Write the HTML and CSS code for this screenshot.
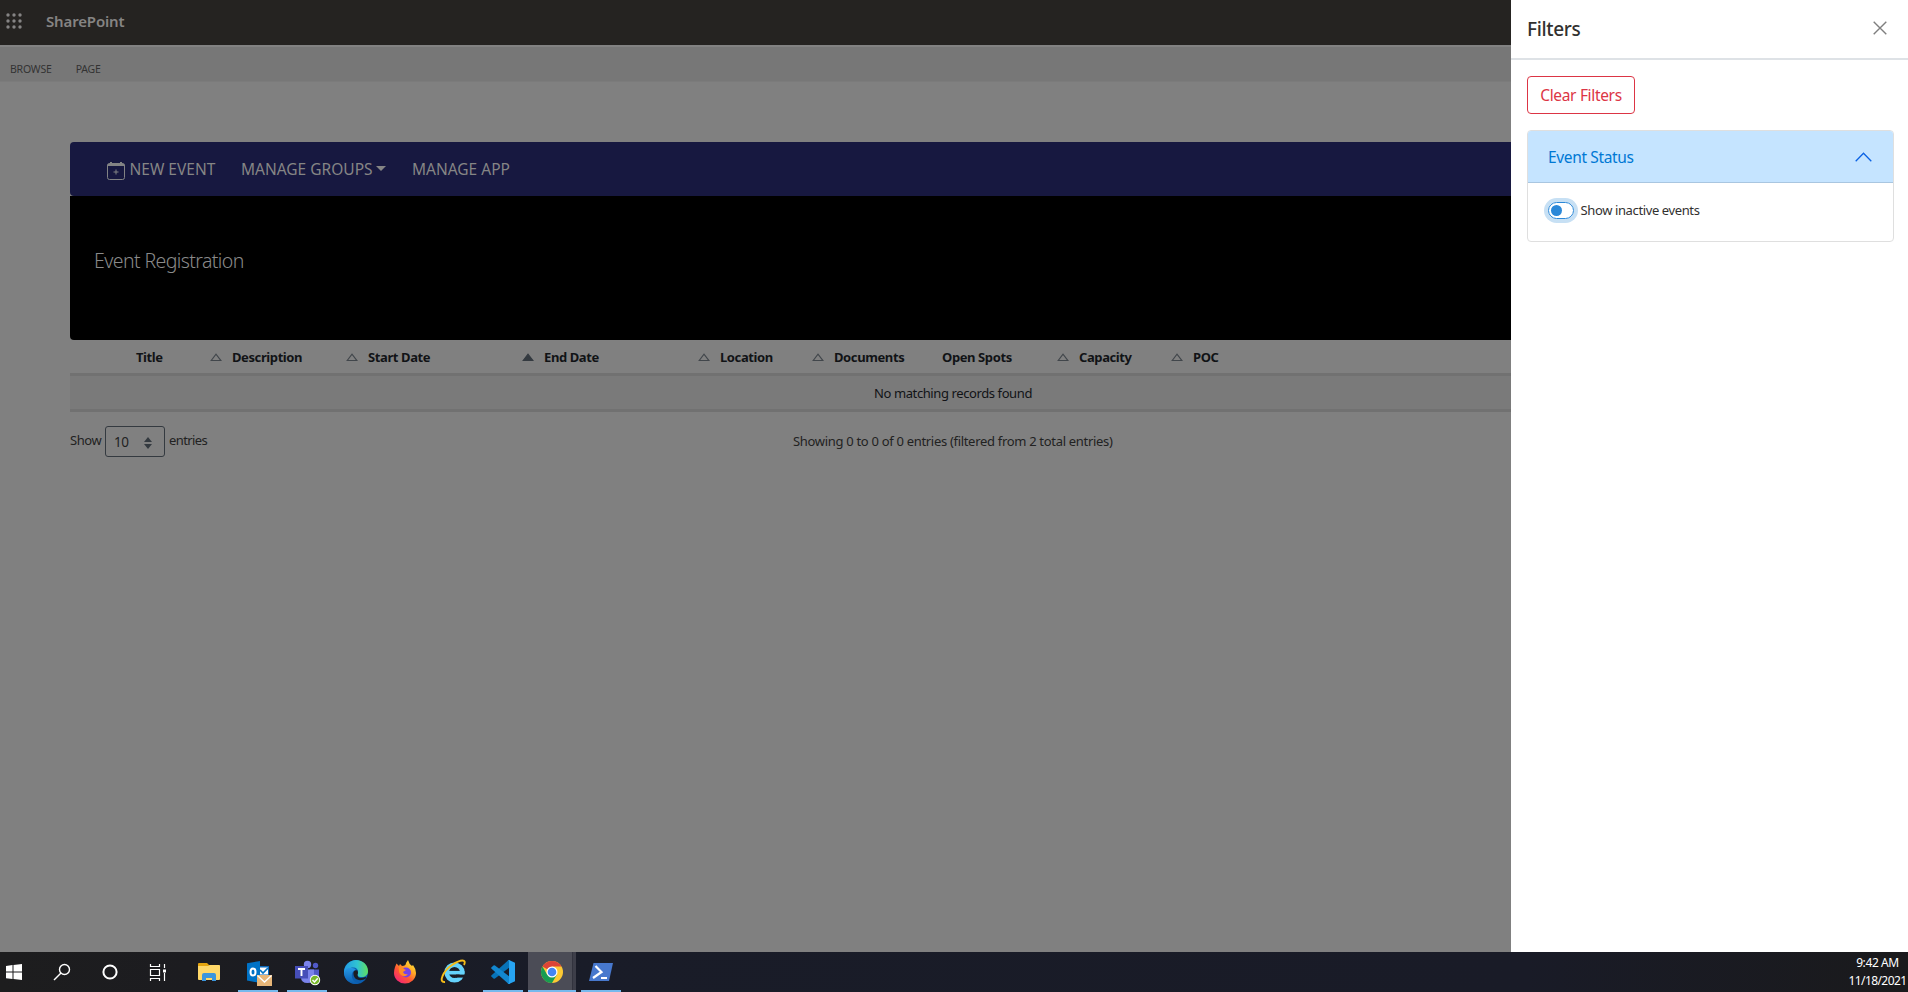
FILE: index.html
```
<!DOCTYPE html>
<html lang="en"><head><meta charset="utf-8"><title>Event Registration</title><link rel="stylesheet" href="styles.css"></head>
<body>
<div class="screen">
<div class="workspace">
<main class="site">
<header class="suite"><svg class="waffle" width="16" height="16" viewBox="0 0 16 16"><g fill="#858484"><circle cx="2" cy="2" r="1.7"/><circle cx="8" cy="2" r="1.7"/><circle cx="14" cy="2" r="1.7"/><circle cx="2" cy="8" r="1.7"/><circle cx="8" cy="8" r="1.7"/><circle cx="14" cy="8" r="1.7"/><circle cx="2" cy="14" r="1.7"/><circle cx="8" cy="14" r="1.7"/><circle cx="14" cy="14" r="1.7"/></g></svg><span class="brand">SharePoint</span></header>
<nav class="ribbon"><span class="browse">BROWSE</span><span class="page">PAGE</span></nav>
<section class="app">
<nav class="menu"><svg width="18" height="18" viewBox="0 0 18 18"><path d="M3 0h2v1h8V0h2v1q3 0 3 3H0Q0 1 3 1z" fill="#828384"/><rect x=".5" y="2" width="17" height="15.5" rx="2" fill="none" stroke="#828384"/><path d="M9 7.5v5M6.500 10h5" stroke="#828384"/></svg><span class="m1">NEW EVENT</span><span class="m2">MANAGE GROUPS</span><i class="caret"></i><span class="m3">MANAGE APP</span></nav>
<div class="hero"><h1>Event Registration</h1></div>
<div class="thead">
<span class="c0">Title</span><span class="c1"><svg class="tri"><path d="M1.200 7.500 6 1.200 10.800 7.500z"/></svg><b>Description</b></span><span class="c2"><svg class="tri"><path d="M1.200 7.500 6 1.200 10.800 7.500z"/></svg><b>Start Date</b></span><span class="c3"><svg class="tri on"><path d="M1.200 7.500 6 1.200 10.800 7.500z"/></svg><b>End Date</b></span><span class="c4"><svg class="tri"><path d="M1.200 7.500 6 1.200 10.800 7.500z"/></svg><b>Location</b></span><span class="c5"><svg class="tri"><path d="M1.200 7.500 6 1.200 10.800 7.500z"/></svg><b>Documents</b></span><span class="c6">Open Spots</span><span class="c7"><svg class="tri"><path d="M1.200 7.500 6 1.200 10.800 7.500z"/></svg><b>Capacity</b></span><span class="c8"><svg class="tri"><path d="M1.200 7.500 6 1.200 10.800 7.500z"/></svg><b>POC</b></span>
</div>
<div class="empty"><span>No matching records found</span></div>
<div class="foot"><span class="show">Show</span><span class="select">10<svg width="8" height="12" viewBox="0 0 8 12"><path d="M0 5 4 0 8 5zM0 7h8L4 12z" fill="#343a40"/></svg></span><span class="entries">entries</span><span class="info">Showing 0 to 0 of 0 entries (filtered from 2 total entries)</span></div>
</section>
</main>
<aside class="panel">
<header class="phead"><h2>Filters</h2><svg width="14" height="14" viewBox="0 0 14 14"><path d="M.7.7l12.600 12.600M13.300.7.7 13.300" stroke="#7f7f7f" stroke-width="1.400" fill="none"/></svg></header>
<div class="pbody">
<button class="clear"><span>Clear Filters</span></button>
<section class="card"><header><span>Event Status</span><svg width="17" height="10" viewBox="0 0 17 10"><path d="M.7 9.200 8.500 1.200l7.800 8" fill="none" stroke="#0c63e4" stroke-width="1.300"/></svg></header>
<div class="opt"><span class="toggle"><i></i></span><label>Show inactive events</label></div></section>
</div>
</aside>
</div>
<footer class="taskbar">
<div class="sys first"><svg width="28" height="40" viewBox="0 0 28 40"><path d="M6 14l6.500-.9v6.400H6zM13.500 13 22 12v7.500h-8.500zM6 20.500h6.500v6.500L6 26.200zM13.500 20.500H22V28l-8.500-1z" fill="#fff"/></svg></div>
<div class="sys"><svg width="28" height="40" viewBox="0 0 28 40"><circle cx="16.500" cy="17.500" r="5" fill="none" stroke="#fff" stroke-width="1.400"/><path d="M13 21l-7 7" stroke="#fff" stroke-width="1.500"/></svg></div>
<div class="sys"><svg width="28" height="40" viewBox="0 0 28 40"><circle cx="14" cy="20" r="6.600" fill="none" stroke="#fff" stroke-width="2"/></svg></div>
<div class="sys"><svg width="28" height="40" viewBox="0 0 28 40"><path d="M6.500 12v2.500h9V12M6.500 17.500h9v6h-9zM6.500 29v-2.500h9V29M20.500 12v4M20.500 21v8" fill="none" stroke="#fff" stroke-width="1.200"/><path d="M19 17.500h3v3h-3z" fill="#fff"/></svg></div>
<div class="gap"></div>
<div class="task"><svg width="40" height="40" viewBox="0 0 40 40"><path d="M9 12q0-1 1-1h8l2 2h9q2 0 2 2v12H9z" fill="#e5a50f"/><path d="M9 14h10l2-1h9q1 0 1 1v13q0 1-1 1H10q-1 0-1-1z" fill="#ffd869"/><path d="M13 29v-6q0-2 2-2h10q2 0 2 2v6h-4v-3h-6v3z" fill="#3c96dd"/></svg></div>
<div class="task run"><svg width="40" height="40" viewBox="-1 0 40 40"><path d="M20 14h10v16H20z" fill="#0a66b8"/><path d="M20 15.500h9v7h-9z" fill="#fff"/><path d="M21 18l3 3 5-5" fill="none" stroke="#0072c6" stroke-width="1.700"/><path d="M8 11.300 21 9v22L8 28.500z" fill="#0072c6"/><ellipse cx="14" cy="20" rx="2.500" ry="3.600" fill="none" stroke="#fff" stroke-width="2"/><path d="M18 23h15v11H18z" fill="#e8b678"/><path d="M18.500 23.500 25.500 30l7-6.500" fill="none" stroke="#fff" stroke-width="1.300"/></svg></div>
<div class="task run"><svg width="40" height="40" viewBox="-1 0 40 40"><circle cx="19.500" cy="12.500" r="3.700" fill="#7b83eb"/><circle cx="27.500" cy="13.500" r="2.700" fill="#5059c9"/><path d="M22 17.500h9v7q0 5-5 5h-4z" fill="#5059c9"/><path d="M13 17.500h13v7.500q0 6-6.500 6T13 25z" fill="#7b83eb"/><path d="M7 14h13v12.500H7z" fill="#464eb8"/><path d="M10 17h7M13.500 17v7" stroke="#fff" stroke-width="1.900"/><circle cx="27" cy="28" r="5.200" fill="#fff"/><circle cx="27" cy="28" r="4.300" fill="#78b82a"/><path d="M24.500 28l2 2 3.300-3.700" fill="none" stroke="#fff" stroke-width="1.500"/></svg></div>
<div class="task"><svg width="40" height="40" viewBox="0 0 40 40"><defs><linearGradient id="eg"><stop stop-color="#229be4"/><stop offset=".55" stop-color="#30c3d2"/><stop offset="1" stop-color="#60e05e"/></linearGradient><linearGradient id="eb" x2="0" y2="1"><stop stop-color="#2697e5"/><stop offset="1" stop-color="#0b5daf"/></linearGradient></defs><circle cx="20" cy="20" r="12" fill="#0b5daf"/><path d="M8 20C8 13 14 8 20 8c7 0 12 5 12 11 0 4-3 6-6 6-5 0-5-2-4-4 1-5-5-7-9-4q-4 2-5 6z" fill="url(#eg)"/><path d="M8 21q2-6 8-5 3 0 4 2c-6 1-6 12 3 13.500C15 33.500 8 28 8 21z" fill="url(#eb)"/><path d="M17.500 20c-1 7 6 11 13 6l-1-1q-8 3-8-2.500 1-1.500 0-4-3-1-4 1.500z" fill="#1a1c23"/></svg></div>
<div class="task"><svg width="40" height="40" viewBox="0 0 40 40"><defs><linearGradient id="ff" x1="1" y1="0" x2=".2" y2="1"><stop stop-color="#fff44f"/><stop offset=".35" stop-color="#ffb325"/><stop offset=".65" stop-color="#ff5634"/><stop offset="1" stop-color="#f3237a"/></linearGradient></defs><path d="M10 15l1.500-3.500L14 14l1-2 2 2q4 0 4-3l2-3q1 4 4 6l1-1q3 4 3 8a11 10.500 0 0 1-22 0q0-3 1-6z" fill="url(#ff)"/><circle cx="21" cy="20.500" r="5" fill="#7542e5"/><path d="M14 15q3-1 5 2l2 1-3 2q1 3 5 2-3 4-7 1-3-3-2-8z" fill="#ff8b24"/></svg></div>
<div class="task"><svg width="40" height="40" viewBox="0 0 40 40"><circle cx="20.500" cy="20.500" r="7.800" fill="none" stroke="#65d2fb" stroke-width="4.600"/><path d="M14 20.700h16.500" stroke="#65d2fb" stroke-width="3.600"/><path d="M22 22.600h11v3H22z" fill="#1a1c25"/><path d="M11 30C4 31 9 19 18 13S33 7 30 13" fill="none" stroke="#f6bd18" stroke-width="1.900"/></svg></div>
<div class="task run"><svg width="40" height="40" viewBox="0 0 40 40"><path d="M27 8v7L12 26.500q-1 .5-1.500 0L8.300 24.500q-.5-.5 0-1L25 8.500z" fill="#0873b8"/><path d="M27 32v-7L12 13.500q-1-.5-1.500 0l-2.200 2q-.5.500 0 1L25 31.500z" fill="#1287d0"/><path d="M26 8l6 2.700v18.600L26 32q-1 0-1.500-1 1.500 1 1.500-1V10q0-2-1.500-1z" fill="#27a4f2"/></svg></div>
<div class="task run active"><svg width="40" height="40" viewBox="0 0 40 40"><circle cx="20" cy="20" r="11" fill="#fcc934"/><path d="M20 20 10.470 14.500A11 11 0 0 1 29.530 14.500H20z" fill="#dc4437"/><path d="M10.470 14.500A11 11 0 0 0 20 31L24.800 22.700 20 20l-4.800 2.700z" fill="#179c52"/><circle cx="20" cy="20" r="5.500" fill="#fff"/><circle cx="20" cy="20" r="4.300" fill="#4285f4"/></svg></div>
<div class="task run"><svg width="40" height="40" viewBox="0 0 40 40"><path d="M12.500 11H32l-4 18H8z" fill="#4778cd"/><path d="M14.500 14l6 6-8.500 6M20 26h6" fill="none" stroke="#fff" stroke-width="2.200"/></svg></div>
<div class="clock"><span>9:42 AM</span><span class="date">11/18/2021</span></div>
</footer>
</div>
</body></html>
```

FILE: styles.css
```
*{box-sizing:border-box}
body{margin:0;font-family:"Noto Sans","Open Sans",sans-serif;background:#808080}
.screen{width:1908px;height:992px;display:flex;flex-direction:column;overflow:hidden}
.workspace{display:flex;height:952px}
.site{width:1511px;background:#808080;overflow:hidden;color:#111}
.site span,.panel span,label,h1,h2{white-space:nowrap}
b{font-weight:inherit}
.suite{height:45px;background:#252321;display:flex;padding:12px 0 0 6px}
.waffle{margin-top:.5px}
.brand{margin-left:24px;font-size:15px;line-height:19px;font-weight:600;letter-spacing:-.15px;color:#858483}
.ribbon{height:37px;border-top:2px solid #828282;border-bottom:1px solid #7b7b7b;background:#777;display:flex;padding:15px 0 0 10px;font-size:10.500px;line-height:14px;letter-spacing:-.2px;color:#333}
.page{margin-left:24px}
.app{padding:60px 0 0 70px}
.menu{height:54px;background:#171840;border-radius:4px 0 0 4px;display:flex;padding:16px 0 0 37px;font-size:15.500px;line-height:22px;color:#858585}
.menu svg{margin-top:4px}
.m1{margin-left:4.500px;width:111.500px}
.m2{width:135px}
.caret{border:5px solid transparent;border-top-color:#858585;border-bottom:0;height:5px;margin-top:8px}
.m3{margin-left:26px}
.hero{height:144px;background:#000;border-radius:0 0 0 4px;padding:51px 0 0 24px}
h1{margin:0;font-weight:300;font-size:19.500px;line-height:28px;letter-spacing:-.6px;color:#8a8a8a}
.thead{height:33px;display:flex;font-size:13px;line-height:18px;font-weight:700;letter-spacing:-.4px;padding-top:8px;color:#111316}
.thead>span{display:flex;flex:none}
.tri{width:12px;height:9px;fill:none;stroke:#41464b;stroke-width:1.200;margin:5px 10px 0 0}
.tri.on{fill:#343a40;stroke:#343a40}
.c0{padding-left:66px;width:140px}.c1{width:136px}.c2{width:176px}.c3{width:176px}.c4{width:114px}.c5{width:130px}.c6{width:115px}.c7{width:114px}
.empty{width:1766px;height:39px;border:solid #717171;border-width:3px 0;background:#7a7a7a;text-align:center;font-size:13px;line-height:34px;letter-spacing:-.4px;color:#111316}
.foot{display:flex;font-size:13px;line-height:18px;padding-top:14px;color:#222}
.show{width:35px;margin-top:5px;letter-spacing:-.4px}
.select{width:60px;height:31px;border:1px solid #343a40;border-radius:3px;display:flex;padding:6px 0 0 8px;font-size:13.500px;letter-spacing:-.5px}
.select svg{margin:4px 0 0 16px}
.entries{margin:5px 0 0 4px;width:624px;letter-spacing:-.6px}
.info{margin-top:6px;letter-spacing:-.31px}
.panel{width:397px;background:#fff}
.phead{height:60px;border-bottom:2px solid #dee2e6;display:flex;justify-content:space-between;padding:20px 21px 0 16px}
h2{margin:0;font-size:19px;line-height:18px;font-weight:500;letter-spacing:-.35px;color:#323130}
.phead svg{margin-top:.5px}
.pbody{padding:16px 14px 0 16px}
.clear{width:108px;height:38px;border:1px solid #dc3545;border-radius:4px;background:#fff;color:#dc3545;font:15.500px/22px "Noto Sans",sans-serif;letter-spacing:-.33px;padding:0;display:flex;justify-content:center;align-items:center}
.card{margin-top:16px;height:112px;border:1px solid #dfdfdf;border-radius:4px;overflow:hidden}
.card header{height:52px;background:#c5e4ff;border-bottom:1px solid #a9c6e0;display:flex;justify-content:space-between;padding:15px 21px 0 20px;font-size:15.500px;line-height:22px;letter-spacing:-.35px;color:#0078d4}
.card header svg{margin-top:6px}
.opt{display:flex;padding:18px 0 0 20px;font-size:13px;line-height:18px;letter-spacing:-.38px;color:#323130}
.toggle{width:26px;height:17px;border:1px solid #2b88d8;border-radius:9px;box-shadow:0 0 0 4px #c7e0f4;padding:2px;margin:1px 6.500px 0 0}
.toggle i{display:block;width:11px;height:11px;border-radius:50%;background:#2b88d8}
.taskbar{height:40px;background:linear-gradient(90deg,#1d1d1e 0,#1c1c20 10%,#191c28 28%,#191b27 80%,#1a1a1c 100%);display:flex}
.taskbar svg{display:block}
.sys{width:48px;padding-left:10px;flex:none}
.sys.first{width:38px;padding-left:0}
.gap{width:2px}
.task{width:49px;flex:none;padding-left:5px;height:40px}
.run{background:linear-gradient(#76b9ed,#76b9ed) 5px 38px/40px 2px no-repeat}
.run.active{background:linear-gradient(#76b9ed,#76b9ed) 1px 38px/48px 2px no-repeat,linear-gradient(#4b4c56,#4b4c56) 1px 0/44px 40px no-repeat,linear-gradient(#32333e,#32333e) 45px 0/1px 40px no-repeat,linear-gradient(#3d3e49,#3d3e49) 46px 0/3px 40px no-repeat}
.clock{margin-left:auto;width:61px;display:flex;flex-direction:column;align-items:center;font-size:12px;line-height:18px;letter-spacing:-.4px;color:#fff;padding-top:2px}
.date{letter-spacing:-.6px}
```
